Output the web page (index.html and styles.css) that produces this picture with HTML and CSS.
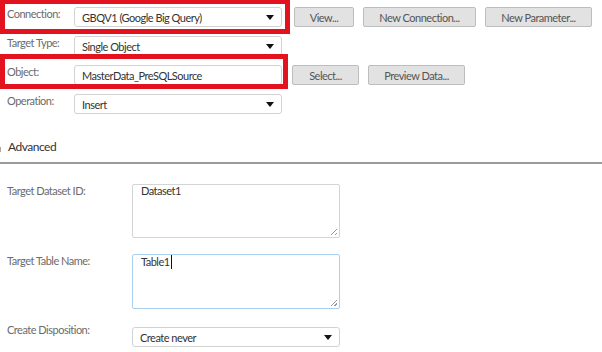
FILE: index.html
```html
<!DOCTYPE html>
<html lang="en">
<head>
    <meta charset="UTF-8">
    <title>Target Properties</title>
    <link rel="stylesheet" href="styles.css">
</head>
<body>
    <div class="basic">
        <div class="row">
            <div class="field marked">
                <span class="label">Connection:</span>
                <div class="select"><span>GBQV1 (Google Big Query)</span><i class="caret"></i></div>
            </div>
            <div class="actions">
                <button class="btn view">View...</button>
                <button class="btn conn">New Connection...</button>
                <button class="btn param">New Parameter...</button>
            </div>
        </div>
        <div class="row">
            <div class="field">
                <span class="label">Target Type:</span>
                <div class="select"><span>Single Object</span><i class="caret"></i></div>
            </div>
        </div>
        <div class="row">
            <div class="field marked">
                <span class="label">Object:</span>
                <div class="input">MasterData_PreSQLSource</div>
            </div>
            <div class="actions">
                <button class="btn sel">Select...</button>
                <button class="btn preview">Preview Data...</button>
            </div>
        </div>
        <div class="row">
            <div class="field">
                <span class="label">Operation:</span>
                <div class="select"><span>Insert</span><i class="caret"></i></div>
            </div>
        </div>
    </div>

    <div class="section-head">
        <span class="fold"></span>
        <h2>Advanced</h2>
    </div>

    <div class="advanced">
        <div class="adv-row">
            <span class="label">Target Dataset ID:</span>
            <div class="area">Dataset1<i class="grip"></i></div>
        </div>
        <div class="adv-row">
            <span class="label">Target Table Name:</span>
            <div class="area focus">Table1<b class="cursor"></b><i class="grip"></i></div>
        </div>
        <div class="adv-row last">
            <span class="label">Create Disposition:</span>
            <div class="select wide"><span>Create never</span><i class="caret"></i></div>
        </div>
    </div>
</body>
</html>
```

FILE: styles.css
```css
body {
    margin: 0;
    background: #fff;
    font-family: Lato, "Open Sans", sans-serif;
    font-size: 11px;
    letter-spacing: -0.5px;
    color: #333;
    overflow: hidden;
}
.basic {
    padding-top: 7px;
    display: flex;
    flex-direction: column;
    gap: 9px;
}
.row {
    display: flex;
    align-items: flex-start;
    height: 20px;
}
.field {
    display: flex;
    align-items: flex-start;
    padding-left: 7px;
    position: relative;
}
.field.marked::after {
    content: "";
    position: absolute;
    left: 0;
    top: -8px;
    width: 280px;
    height: 25px;
    border: 5px solid #e3121f;
}
.row:nth-child(3) .field.marked::after {
    top: -11px;
    width: 278px;
}
.label {
    width: 67px;
    color: #6b6b6b;
    line-height: 16px;
    margin-top: -1px;
}
.select, .input {
    box-sizing: border-box;
    width: 208px;
    height: 20px;
    border: 1px solid #d2d2d2;
    border-radius: 3px;
    background: #fff;
    padding: 0 7px;
    display: flex;
    align-items: center;
    justify-content: space-between;
    color: #333;
}
.caret {
    width: 0;
    height: 0;
    border-left: 4px solid transparent;
    border-right: 4px solid transparent;
    border-top: 5px solid #111;
}
.actions {
    display: flex;
    gap: 9px;
    margin-left: 12px;
}
.row:nth-child(3) .actions {
    margin-left: 10px;
}
.btn {
    height: 20px;
    box-sizing: border-box;
    border: 1px solid #bdbdbd;
    border-radius: 2px;
    background: #e2e2e2;
    color: #555;
    font-family: inherit;
    font-size: 11px;
    letter-spacing: -0.5px;
    padding: 0;
}
.view { width: 60px; }
.conn { width: 113px; }
.param { width: 107px; }
.sel { width: 67px; }
.preview { width: 97px; }

.section-head {
    margin-top: 13px;
    height: 35px;
    border-bottom: 2px solid #9a9a9a;
    display: flex;
    align-items: flex-end;
}
.fold {
    width: 1px;
    height: 5px;
    margin-bottom: 10px;
    background: #aaa;
}
.section-head h2 {
    margin: 0 0 7px 7px;
    font-size: 12px;
    line-height: 16px;
    font-weight: normal;
    color: #333;
}
.advanced {
    padding-top: 20px;
    display: flex;
    flex-direction: column;
    gap: 16px;
}
.adv-row {
    display: flex;
    align-items: flex-start;
    padding-left: 7px;
}
.adv-row .label {
    width: 125px;
    margin-top: -1px;
}
.adv-row.last .label {
    margin-top: -3px;
}
.area {
    box-sizing: border-box;
    width: 208px;
    height: 54px;
    border: 1px solid #d4d4d4;
    border-radius: 2px;
    padding: 0 8px;
    line-height: 12px;
    position: relative;
}
.area.focus {
    height: 55px;
    border-color: #a9d1f2;
    padding-top: 1px;
}
.cursor {
    display: inline-block;
    width: 1px;
    height: 14px;
    margin-top: -1px;
    margin-left: 1px;
    background: #111;
    vertical-align: top;
}
.grip {
    position: absolute;
    right: 2px;
    bottom: 2px;
    width: 6px;
    height: 6px;
    background: linear-gradient(135deg, transparent 45%, #999 45%, #999 55%, transparent 55%, transparent 75%, #999 75%, #999 85%, transparent 85%);
}
.select.wide {
    margin-top: 2px;
}
```
